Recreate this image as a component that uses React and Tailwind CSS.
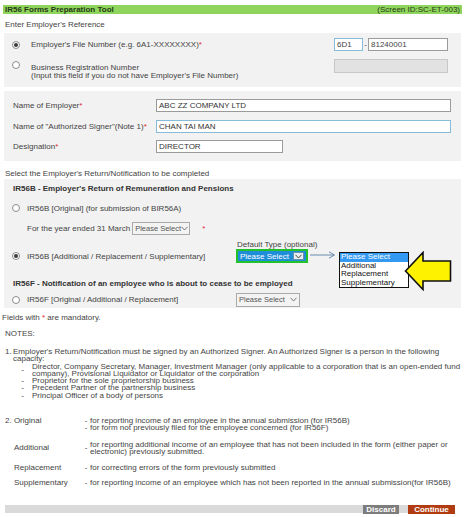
import React from 'react';

const Radio = ({ checked }) => (
  <span className="w-[8px] h-[8px] rounded-full border border-[#8c8c8c] bg-white flex items-center justify-center shrink-0">
    {checked && <span className="w-[4px] h-[4px] rounded-full bg-[#3a3a3a]" />}
  </span>
);

const Req = () => <span className="text-[#e0282e]">*</span>;

const Chevron = ({ color = '#666' }) => (
  <svg width="7" height="5" viewBox="0 0 7 5" className="shrink-0">
    <path d="M0.5 0.8 L3.5 4 L6.5 0.8" fill="none" stroke={color} strokeWidth="0.9" />
  </svg>
);

const PleaseSelect = ({ className }) => (
  <span className={'flex items-center justify-between whitespace-nowrap text-[7.5px] pl-[2px] pr-[2px] border border-[#a9a9a9] bg-[#f3f3f3] text-[#555] ' + className}>
    Please Select
    <Chevron />
  </span>
);

const Field = ({ value, className }) => (
  <span className={'flex items-center h-[13px] px-[2px] bg-white border ' + className}>{value}</span>
);

const App = () => {
  return (
    <div className="w-[465px] h-[517px] bg-white text-[#444] text-[8px] leading-[9px] font-['Liberation_Sans',Arial,sans-serif] relative overflow-hidden">
      {/* title bar */}
      <div className="pt-[5px] px-[3px]">
        <div className="h-[9px] bg-[#8fd45c] flex items-center justify-between px-[2px] text-[#253a17]">
          <span className="font-bold">IR56 Forms Preparation Tool</span>
          <span>(Screen ID:SC-ET-003)</span>
        </div>
      </div>

      <div className="mt-[6px] pl-[5px]">Enter Employer's Reference</div>

      {/* employer reference */}
      <div className="mt-[4px] mx-[4px] h-[54px] bg-[#f2f2f2] pt-[5px]">
        <div className="flex items-center h-[13px]">
          <span className="ml-[8px]"><Radio checked /></span>
          <span className="ml-[11px]">Employer's File Number (e.g. 6A1-XXXXXXXX)<Req /></span>
          <span className="ml-auto mr-[13px] flex items-center">
            <Field value="6D1" className="w-[29px] border-[#86bcd9]" />
            <span className="w-[5px] text-center">-</span>
            <Field value="81240001" className="w-[80px] border-[#9a9a9a]" />
          </span>
        </div>
        <div className="flex items-start h-[14px] mt-[8px]">
          <span className="ml-[8px] mt-[2px]"><Radio /></span>
          <span className="ml-[11px] mt-[5px] leading-[7.5px]">
            Business Registration Number
            <br />
            (Input this field if you do not have Employer's File Number)
          </span>
          <span className="ml-auto mr-[13px] w-[114px] h-[14px] bg-[#e2e2e2] border border-[#c8c8c8]" />
        </div>
      </div>

      {/* employer details */}
      <div className="mt-[4px] mx-[4px] h-[70px] bg-[#f2f2f2] pt-[8px] flex flex-col gap-[7.5px]">
        <div className="flex items-center h-[13px]">
          <span className="ml-[9px] w-[143px]">Name of Employer<Req /></span>
          <Field value="ABC ZZ COMPANY LTD" className="w-[295px] border-[#9a9a9a] text-[#333]" />
        </div>
        <div className="flex items-center h-[13px]">
          <span className="ml-[9px] w-[143px]">Name of "Authorized Signer"(Note 1)<Req /></span>
          <Field value="CHAN TAI MAN" className="w-[295px] border-[#86bcd9] text-[#333]" />
        </div>
        <div className="flex items-center h-[13px]">
          <span className="ml-[9px] w-[143px]">Designation<Req /></span>
          <Field value="DIRECTOR" className="w-[127px] border-[#9a9a9a] text-[#333]" />
        </div>
      </div>

      <div className="mt-[8px] pl-[5px]">Select the Employer's Return/Notification to be completed</div>

      {/* return selection */}
      <div className="mt-[1px] mx-[4px] bg-[#f2f2f2]">
        <div className="h-[18px] flex items-center pl-[9px] font-bold text-[#333]">
          IR56B - Employer's Return of Remuneration and Pensions
        </div>
        <div className="h-[22px] flex items-center">
          <span className="ml-[8px]"><Radio /></span>
          <span className="ml-[7px]">IR56B [Original] (for submission of BIR56A)</span>
        </div>
        <div className="h-[18px] flex items-center pl-[23px]">
          <span>For the year ended 31 March</span>
          <PleaseSelect className="ml-[2px] w-[58px] h-[13px]" />
          <span className="ml-[12px]"><Req /></span>
        </div>
        <div className="h-[38px] flex items-center">
          <span className="ml-[8px]"><Radio checked /></span>
          <span className="ml-[7px] w-[209px]">IR56B [Additional / Replacement / Supplementary]</span>
          <span className="flex flex-col pb-[9px]">
            <span className="h-[9px] pl-[1px]">Default Type (optional)</span>
            <span className="w-[72px] h-[14px] border-[2px] border-[#22c22a] bg-[#1f8ed8] flex items-center justify-between whitespace-nowrap pl-[2px] pr-[2px] text-white">
              Please Select
              <span className="w-[11px] h-[8px] bg-[#e9eef3] border border-[#6a8fb0] flex items-center justify-center">
                <Chevron color="#333" />
              </span>
            </span>
          </span>
        </div>
        <div className="h-[16px] flex items-center pl-[9px] font-bold text-[#333]">
          IR56F - Notification of an employee who is about to cease to be employed
        </div>
        <div className="h-[17px] flex items-center">
          <span className="ml-[8px]"><Radio /></span>
          <span className="ml-[7px] w-[209px]">IR56F [Original / Additional / Replacement]</span>
          <PleaseSelect className="w-[64px] h-[14px]" />
        </div>
      </div>

      <div className="mt-[5px] pl-[2px]">
        Fields with <Req /> are mandatory.
      </div>
      <div className="mt-[7px] pl-[5px]">NOTES:</div>

      {/* notes */}
      <div className="mt-[10px] pl-[5px] pr-[2px] leading-[7.3px]">
        <div className="flex">
          <span className="w-[8px] shrink-0">1.</span>
          <div>
            Employer's Return/Notification must be signed by an Authorized Signer. An Authorized Signer is a person in the following
            <br />
            capacity:
            <div>
              <div className="flex items-center">
                <span className="w-[19px] shrink-0 text-center">-</span>
                <span className="whitespace-nowrap">
                  Director, Company Secretary, Manager, Investment Manager (only applicable to a corporation that is an open-ended fund
                  <br />
                  company), Provisional Liquidator or Liquidator of the corporation
                </span>
              </div>
              <div className="flex">
                <span className="w-[19px] shrink-0 text-center">-</span>
                <span>Proprietor for the sole proprietorship business</span>
              </div>
              <div className="flex">
                <span className="w-[19px] shrink-0 text-center">-</span>
                <span>Precedent Partner of the partnership business</span>
              </div>
              <div className="flex">
                <span className="w-[19px] shrink-0 text-center">-</span>
                <span>Principal Officer of a body of persons</span>
              </div>
            </div>
          </div>
        </div>

        <div className="mt-[18px] grid grid-cols-[77px_8px_1fr] gap-y-[9px] items-center">
          <span className="self-start">2. Original</span>
          <span className="self-start text-center">-<br />-</span>
          <span>
            for reporting income of an employee in the annual submission (for IR56B)
            <br />
            for form not previously filed for the employee concerned (for IR56F)
          </span>

          <span className="pl-[9px]">Additional</span>
          <span className="text-center">-</span>
          <span>
            for reporting additional income of an employee that has not been included in the form (either paper or
            <br />
            electronic) previously submitted.
          </span>

          <span className="pl-[9px]">Replacement</span>
          <span className="text-center">-</span>
          <span>for correcting errors of the form previously submitted</span>

          <span className="pl-[9px] -mt-[2px]">Supplementary</span>
          <span className="text-center -mt-[2px]">-</span>
          <span className="-mt-[2px] whitespace-nowrap">for reporting income of an employee which has not been reported in the annual submission(for IR56B)</span>
        </div>
      </div>

      {/* action bar */}
      <div className="absolute left-[5px] top-[505px] w-[450px] h-[8px] bg-[#dadada] flex justify-end items-center gap-[9px]">
        <span className="h-[9px] w-[36px] bg-[#7d7d7d] text-white font-bold flex items-center justify-center">Discard</span>
        <span className="h-[9px] w-[47px] bg-[#b13c12] text-white font-bold flex items-center justify-center">Continue</span>
      </div>

      {/* open dropdown annotation */}
      <svg className="absolute left-[310px] top-[251px]" width="26" height="8" viewBox="0 0 26 8">
        <path d="M0 4 H24 M19 0.8 L24.5 4 L19 7.2" fill="none" stroke="#5a7fa6" strokeWidth="0.9" />
      </svg>
      <div className="absolute left-[339px] top-[252px] w-[70px] border-[1.5px] border-[#111] bg-white text-[#111] leading-[8.5px] whitespace-nowrap">
        <div className="bg-[#3399f3] text-white pl-[1px]">Please Select</div>
        <div className="pl-[1px]">Additional</div>
        <div className="pl-[1px]">Replacement</div>
        <div className="pl-[1px]">Supplementary</div>
      </div>
      <svg className="absolute left-[404px] top-[251px]" width="48" height="40" viewBox="0 0 48 40">
        <path d="M1.5 20 L19 1.5 L19 10 L46.5 10 L46.5 30 L19 30 L19 38.5 Z" fill="#fff200" stroke="#111" strokeWidth="1.6" strokeLinejoin="miter" />
      </svg>
    </div>
  );
};

export default App;
